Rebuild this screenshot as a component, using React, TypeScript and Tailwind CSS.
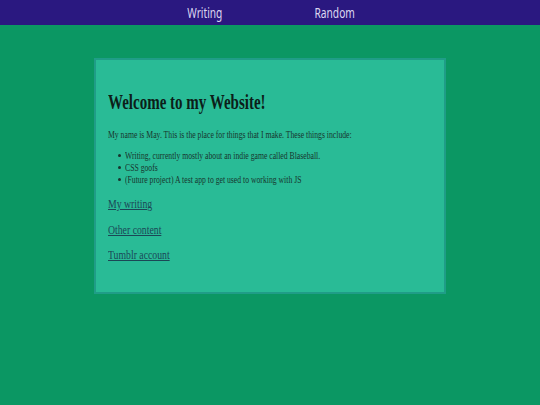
const serif = "font-['Liberation_Serif','Times_New_Roman',serif]";

function T({ children, s = "scale-x-[0.77]" }: { children: React.ReactNode; s?: string }) {
  return <span className={`inline-block origin-left whitespace-nowrap ${s}`}>{children}</span>;
}

export default function App() {
  return (
    <div className="min-h-[405px] w-full bg-[#0b9763]">
      <nav className="flex h-[25px] items-center justify-center bg-[#2a1880] font-['Noto_Sans',sans-serif] text-[15px] leading-[25px] text-[#dcd7f0]">
        <div className="flex w-[130px] justify-center">
          <span className="inline-block scale-x-[0.68]">Writing</span>
        </div>
        <div className="flex w-[130px] justify-center">
          <span className="inline-block scale-x-[0.68]">Random</span>
        </div>
      </nav>
      <main className="flex justify-center pt-[33px]">
        <section
          className={`h-[236px] w-[352px] border-2 border-[#1f9d87] bg-[#29bb96] px-[12px] pt-[30px] ${serif}`}
        >
          <h1 className="text-[20px] font-bold leading-[24px] text-[#0c1e19]">
            <T s="scale-x-[0.75]">Welcome to my Website!</T>
          </h1>
          <p className="mt-[14.5px] text-[10px] leading-[12px] text-[#18352e]">
            <T>My name is May. This is the place for things that I make. These things include:</T>
          </p>
          <ul className="mt-[9px] flex flex-col text-[10px] leading-[12px] text-[#18352e]">
            {[
              "Writing, currently mostly about an indie game called Blaseball.",
              "CSS goofs",
              "(Future project) A test app to get used to working with JS",
            ].map((t) => (
              <li key={t} className="flex h-[12px] items-center">
                <span className="ml-[10px] mr-[4px] h-[3px] w-[3px] rounded-full bg-[#18352e]" />
                <T>{t}</T>
              </li>
            ))}
          </ul>
          <div className="mt-[11.5px] flex flex-col gap-[11.5px] text-[12.5px] leading-[14px] text-[#1b4756]">
            {["My writing", "Other content", "Tumblr account"].map((t) => (
              <a key={t} href="#" className="block h-[14px]">
                <span className="inline-block origin-left scale-x-[0.78] whitespace-nowrap underline">{t}</span>
              </a>
            ))}
          </div>
        </section>
      </main>
    </div>
  );
}
